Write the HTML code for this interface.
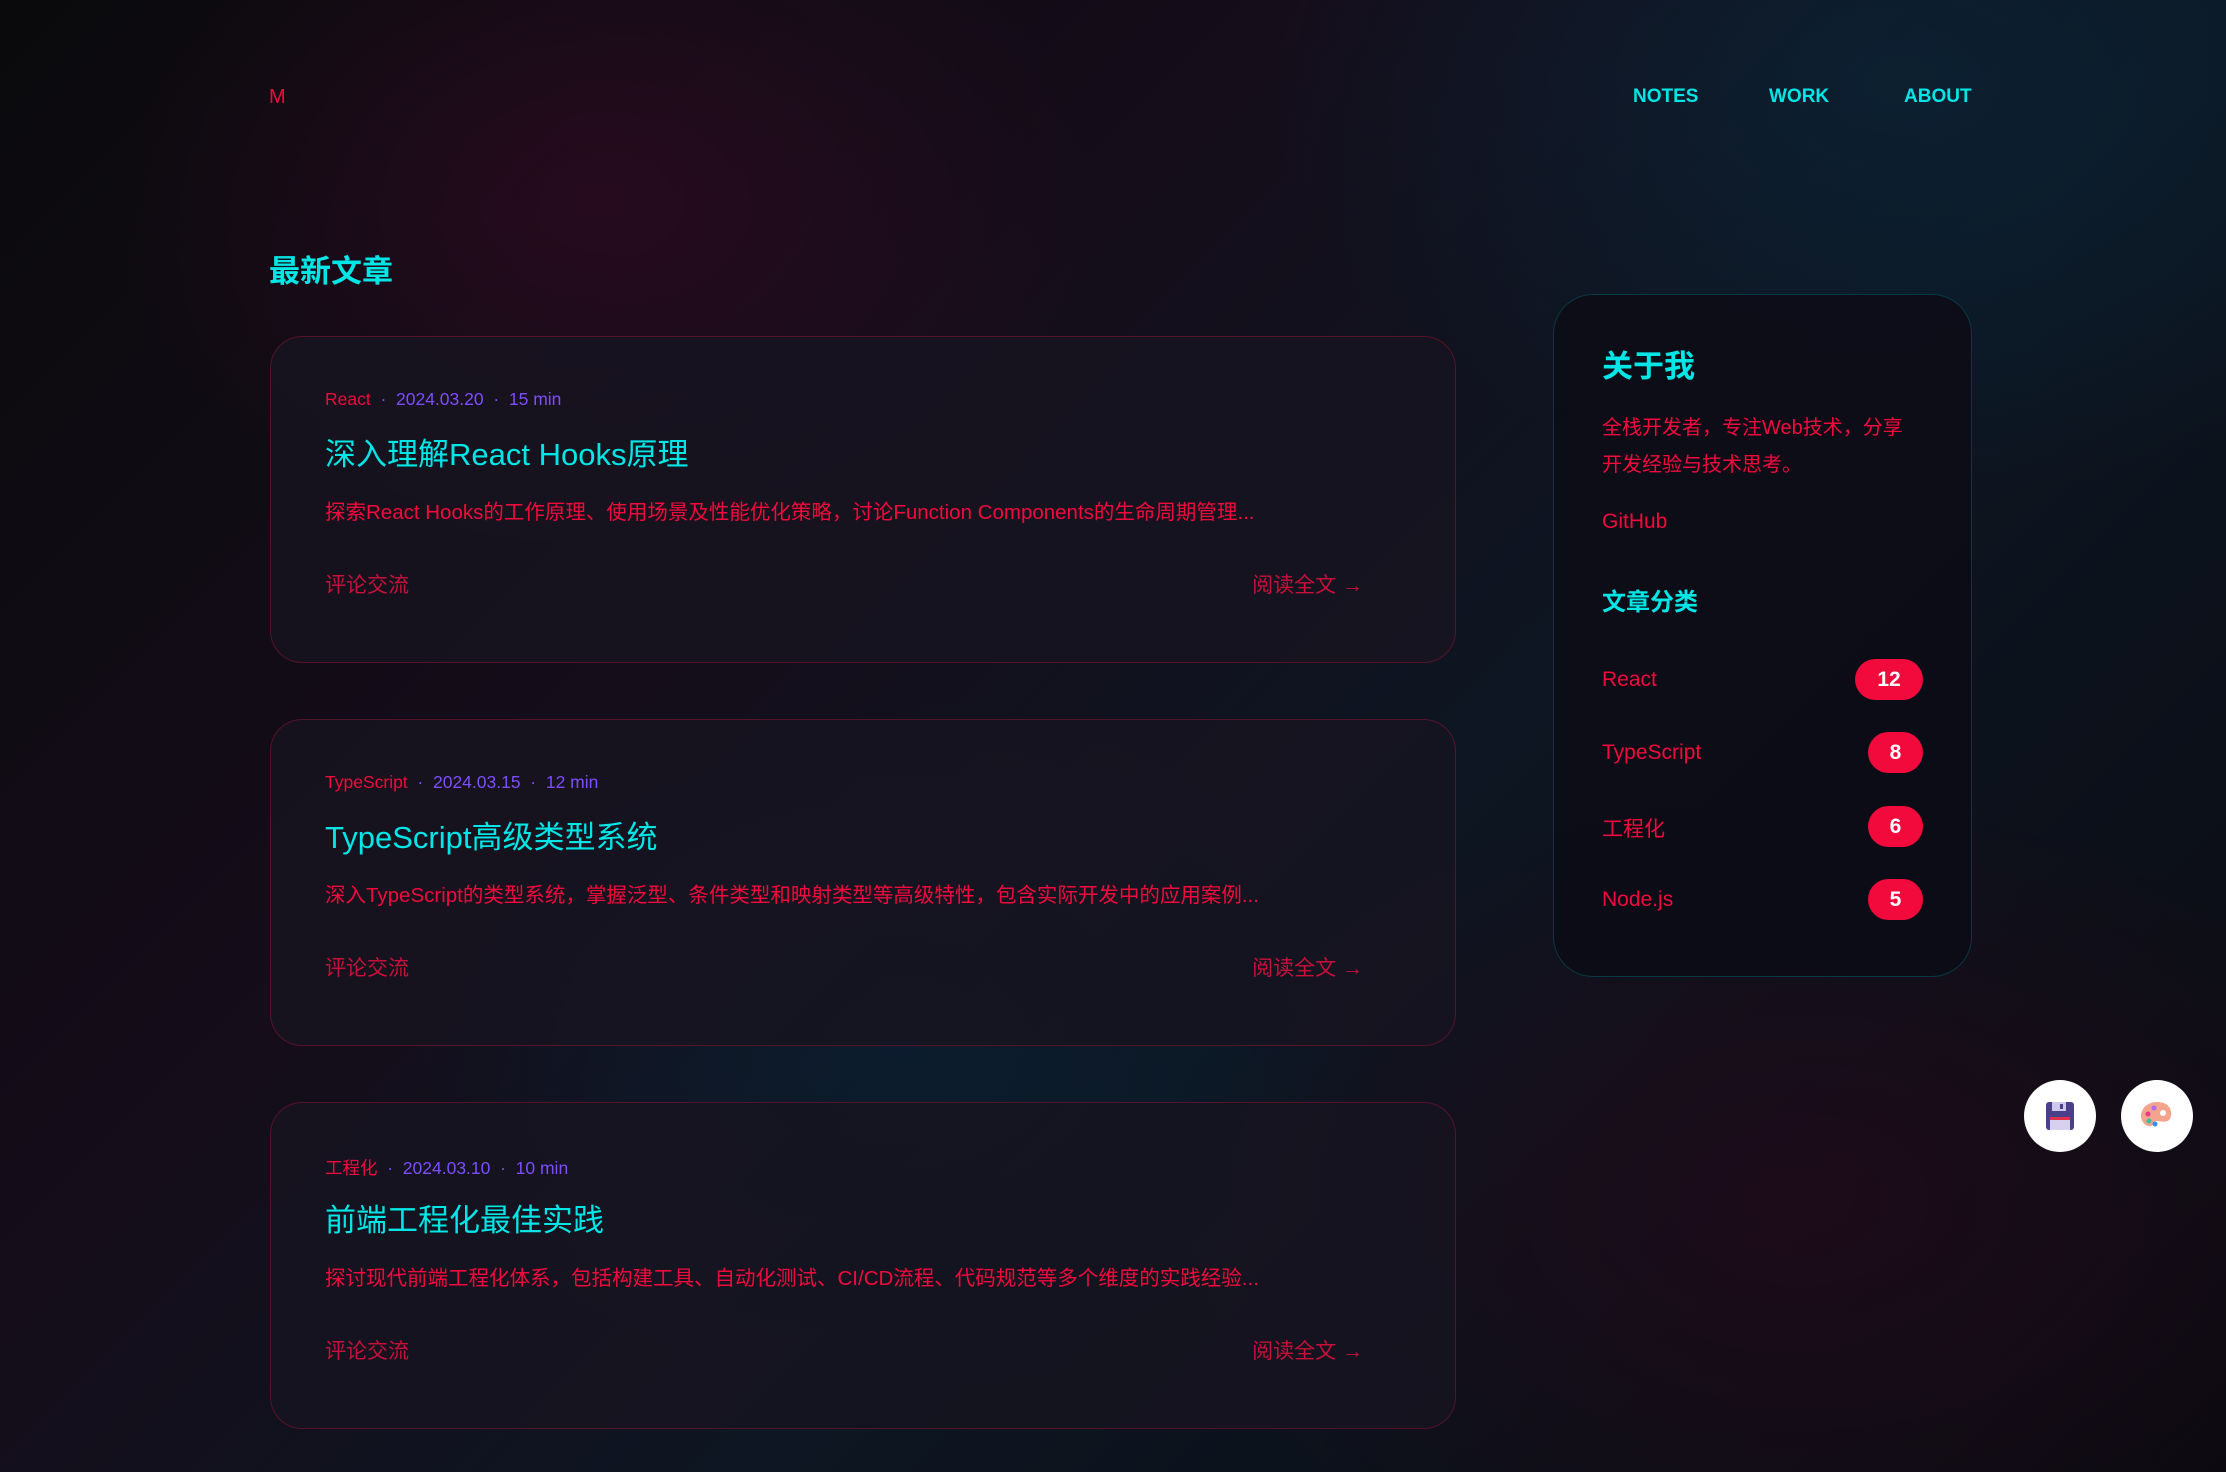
<!DOCTYPE html>
<html><head><meta charset="utf-8"><style>
*{margin:0;padding:0;box-sizing:border-box}
html,body{width:2226px;height:1472px;overflow:hidden}
body{font-family:"Liberation Sans","Noto Sans CJK SC",sans-serif;position:relative;
background:
radial-gradient(ellipse 700px 500px at 600px 200px, rgba(60,10,40,0.5), transparent 70%),
radial-gradient(ellipse 900px 600px at 1900px 80px, rgba(10,40,60,0.6), transparent 70%),
radial-gradient(ellipse 700px 500px at 900px 1050px, rgba(10,35,55,0.6), transparent 70%),
radial-gradient(ellipse 900px 600px at 1800px 1200px, rgba(40,8,25,0.6), transparent 70%),
linear-gradient(135deg,#0a0a0c 0%,#150d1a 35%,#0d1622 60%,#0b0a10 100%);}
.a{position:absolute;white-space:nowrap}
.cy{color:#00e6e6}.rd{color:#f20a3c}.pu{color:#7d4dff}
.card{position:absolute;left:270px;width:1186px;height:327px;border-radius:32px;background:rgba(22,20,32,0.85);border:1.5px solid rgba(200,20,60,0.35)}
.meta{position:absolute;left:54px;top:52px;font-size:17.5px}
.title{position:absolute;left:54px;top:92px;font-size:31px;color:#00e6e6}
.ex{position:absolute;left:54px;top:158px;font-size:20.5px;color:#f20a3c}
.f1{position:absolute;left:54px;top:232px;font-size:21px;color:#c8103a}
.f2{position:absolute;right:92px;top:232px;font-size:21px;color:#c8103a}
.side{position:absolute;left:1553px;top:294px;width:419px;height:683px;border-radius:40px;background:rgba(12,12,22,0.9);border:1.5px solid rgba(0,140,150,0.35)}
.cat{position:absolute;left:48px;font-size:21px;color:#f20a3c}
.bd{position:absolute;right:48px;height:41px;border-radius:21px;background:#f20a3c;color:#fff;font-weight:bold;font-size:21px;text-align:center;line-height:41px}
.fb{position:absolute;top:1080px;width:72px;height:72px;border-radius:50%;background:#fff}
</style></head><body>
<div class="a rd" style="left:269px;top:86px;font-size:20px">M</div>
<div class="a cy" style="left:1633px;top:86px;font-size:19px;font-weight:bold">NOTES</div>
<div class="a cy" style="left:1769px;top:86px;font-size:19px;font-weight:bold">WORK</div>
<div class="a cy" style="left:1904px;top:86px;font-size:19px;font-weight:bold">ABOUT</div>
<div class="a cy" style="left:269px;top:246px;font-size:31px;font-weight:bold">最新文章</div>

<div class="card" style="top:336px">
<div class="meta a"><span class="rd">React</span> <span class="pu">&nbsp;·&nbsp; 2024.03.20 &nbsp;·&nbsp; 15 min</span></div>
<div class="title a">深入理解React Hooks原理</div>
<div class="ex a">探索React Hooks的工作原理、使用场景及性能优化策略，讨论Function Components的生命周期管理...</div>
<div class="f1 a">评论交流</div><div class="f2 a">阅读全文 →</div>
</div>
<div class="card" style="top:719px">
<div class="meta a"><span class="rd">TypeScript</span> <span class="pu">&nbsp;·&nbsp; 2024.03.15 &nbsp;·&nbsp; 12 min</span></div>
<div class="title a">TypeScript高级类型系统</div>
<div class="ex a">深入TypeScript的类型系统，掌握泛型、条件类型和映射类型等高级特性，包含实际开发中的应用案例...</div>
<div class="f1 a">评论交流</div><div class="f2 a">阅读全文 →</div>
</div>
<div class="card" style="top:1102px">
<div class="meta a"><span class="rd">工程化</span> <span class="pu">&nbsp;·&nbsp; 2024.03.10 &nbsp;·&nbsp; 10 min</span></div>
<div class="title a">前端工程化最佳实践</div>
<div class="ex a">探讨现代前端工程化体系，包括构建工具、自动化测试、CI/CD流程、代码规范等多个维度的实践经验...</div>
<div class="f1 a">评论交流</div><div class="f2 a">阅读全文 →</div>
</div>

<div class="side">
<div class="a cy" style="left:48px;top:46px;font-size:31px;font-weight:bold">关于我</div>
<div class="a rd" style="left:48px;top:115px;font-size:20px;line-height:37px">全栈开发者，专注Web技术，分享<br>开发经验与技术思考。</div>
<div class="a rd" style="left:48px;top:215px;font-size:21px">GitHub</div>
<div class="a cy" style="left:48px;top:287px;font-size:24px;font-weight:bold">文章分类</div>
<div class="cat a" style="top:373px">React</div><div class="bd" style="top:364px;width:68px">12</div>
<div class="cat a" style="top:446px">TypeScript</div><div class="bd" style="top:437px;width:55px">8</div>
<div class="cat a" style="top:518px">工程化</div><div class="bd" style="top:511px;width:55px">6</div>
<div class="cat a" style="top:593px">Node.js</div><div class="bd" style="top:584px;width:55px">5</div>
</div>

<div class="fb" style="left:2024px">
<svg width="72" height="72" viewBox="0 0 72 72"><rect x="22" y="22" width="28" height="28" rx="3" fill="#4a3f8a"/><rect x="28" y="22" width="14" height="9" fill="#cfc8ea"/><rect x="36" y="24" width="3" height="5" fill="#4a3f8a"/><rect x="26" y="37" width="20" height="13" fill="#d8d0ee"/><rect x="26" y="37" width="20" height="3" fill="#e0304a"/></svg>
</div>
<div class="fb" style="left:2121px">
<svg width="72" height="72" viewBox="0 0 72 72"><path d="M36 22c-9 0-16 6-16 14 0 6 5 11 10 10 3-1 2-5 5-5 4 0 10 2 13-1 4-4 4-18-12-18z" fill="#f4a38c"/><circle cx="42" cy="33" r="3" fill="#fff"/><circle cx="27" cy="34" r="2.5" fill="#e83a8a"/><circle cx="33" cy="28" r="2.5" fill="#b06af0"/><circle cx="28" cy="41" r="2.5" fill="#3ac0a0"/><circle cx="34" cy="44" r="2.5" fill="#3a8af0"/></svg>
</div>
</body></html>
